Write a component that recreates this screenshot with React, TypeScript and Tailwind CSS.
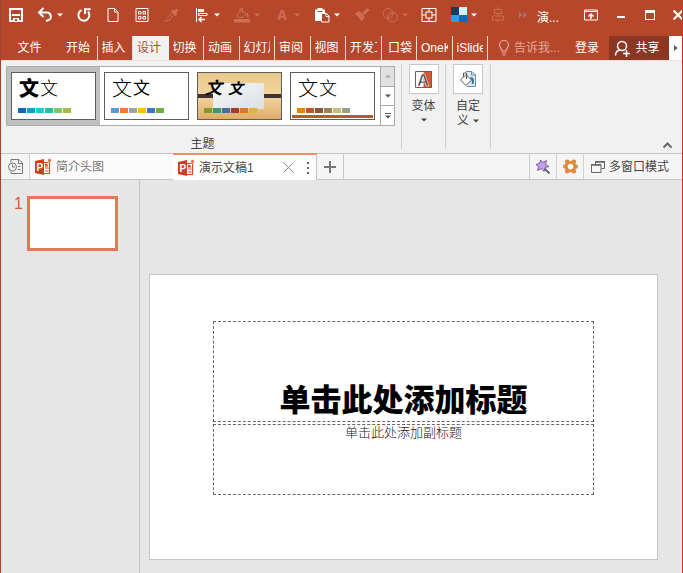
import type { ReactNode } from 'react'

const UI_FONT = "font-['Liberation_Sans','Noto_Sans_CJK_SC',sans-serif]"

function Caret({ className = '' }: { className?: string }) {
  return (
    <svg width="6" height="4" viewBox="0 0 6 4" className={`shrink-0 ${className}`} aria-hidden="true">
      <path d="M0 0.5h6L3 3.5z" fill="currentColor" />
    </svg>
  )
}

function Icon({ children, className = '' }: { children: ReactNode; className?: string }) {
  return (
    <svg width="16" height="16" viewBox="0 0 16 16" fill="none" stroke="currentColor" className={`shrink-0 ${className}`} aria-hidden="true">
      {children}
    </svg>
  )
}

function PptIcon() {
  return (
    <svg width="18" height="18" viewBox="0 0 18 18" className="shrink-0" aria-hidden="true">
      <path d="M9 4.500h6.500v11H9z" fill="#fff" stroke="#d6492a" strokeWidth="1.200" />
      <path d="M11 10h3.500M11 13h3.500" stroke="#d6492a" strokeWidth="1.200" />
      <path d="M11 5.500a3 3 0 0 1 3 3h-3z" fill="#d6492a" />
      <path d="M1 3 10 1v16L1 15z" fill="#d13c1c" />
      <circle cx="15.500" cy="2.500" r="1.900" fill="#ee6a42" stroke="#fff" strokeWidth="0.500" />
      <text x="2.500" y="12.500" fontSize="10" fontWeight="bold" fontFamily="Liberation Sans" fill="#fff">P</text>
    </svg>
  )
}

type Tool = { label: string; icon: ReactNode; width?: string; caret?: boolean; faded?: boolean }

const TOOLS: Tool[] = [
  {
    label: '保存',
    icon: (
      <Icon>
        <path d="M2 2h12v12H2z" strokeWidth="2" />
        <path d="M4 8h8" strokeWidth="2" />
        <path d="M5 11h6v3H5z" fill="currentColor" stroke="none" />
        <path d="M7 12h2v2H7z" fill="#b7472a" stroke="none" />
      </Icon>
    ),
  },
  {
    label: '撤消',
    width: 'w-[38px]',
    caret: true,
    icon: (
      <Icon>
        <path d="M2 5.500h7.500a4 4 0 0 1 1.500 7.800L9 14" strokeWidth="2" />
        <path d="M6.500 1 2 5.500 6.500 10" strokeWidth="2" />
      </Icon>
    ),
  },
  {
    label: '恢复',
    icon: (
      <Icon>
        <path d="M5.500 3.200A5.500 5.500 0 1 0 12 4.500" strokeWidth="2" />
        <path d="M9 7V2.200h5.500" strokeWidth="2" />
      </Icon>
    ),
  },
  {
    label: '新建',
    width: 'w-[28px]',
    icon: (
      <Icon>
        <path d="M3 1.500h6.500L13 5v9.500H3z" />
        <path d="M9.500 1.500V5H13" />
      </Icon>
    ),
  },
  {
    label: '网格',
    icon: (
      <Icon>
        <path d="M2 1.500h12v13H2zM4.500 4.500h2.500v2.500H4.500zM9 4.500h2.500v2.500H9zM4.500 9.500h2.500v2.500H4.500zM9 9.500h2.500v2.500H9z" />
      </Icon>
    ),
  },
  {
    label: '取色器',
    faded: true,
    icon: (
      <Icon>
        <path d="M1.500 14.500 2.500 11.500 9 5l2 2-6.500 6.500z" />
        <path d="M8 3.500 12.500 8M10.500 5.500 13.500 2.500" strokeWidth="3" />
      </Icon>
    ),
  },
  {
    label: '对齐',
    width: 'w-[40px]',
    caret: true,
    icon: (
      <Icon>
        <path d="M2.500 1v14" />
        <path d="M4 2h6v3H4z" fill="currentColor" stroke="none" />
        <path d="M4.500 6.500H13v2H4.500z" />
        <path d="M5 12.500h6M7.500 10 5 12.500 7.500 15" strokeWidth="1.500" />
      </Icon>
    ),
  },
  {
    label: '形状填充',
    width: 'w-[40px]',
    caret: true,
    faded: true,
    icon: (
      <Icon>
        <path d="M3 7 8 3l4.500 4.500L8 10.500H4zM6 5V1.500h2.500V6" />
        <path d="M12.500 6c2 2 1.500 4 1 4.500" strokeWidth="1.500" />
        <path d="M0 12h16v3.500H0z" fill="currentColor" stroke="none" />
      </Icon>
    ),
  },
  {
    label: '字体颜色',
    width: 'w-[40px]',
    caret: true,
    faded: true,
    icon: <span className="w-4 text-center text-sm leading-4 font-bold">A</span>,
  },
  {
    label: '粘贴',
    width: 'w-[40px]',
    caret: true,
    icon: (
      <Icon>
        <path d="M1 2.500h2.500V1h5v1.500H11V6H7v8H1z" fill="currentColor" stroke="none" />
        <path d="M3.500 4.500h5" stroke="#b7472a" />
        <path d="M7.500 6.500h5l2.500 2.500v6H7.500z" fill="#b7472a" />
        <path d="M12 6.500V9.500h3" />
      </Icon>
    ),
  },
  {
    label: '格式刷',
    faded: true,
    icon: (
      <Icon>
        <path d="M1 6.500 6 4l5 5-3 5.500z" fill="currentColor" stroke="none" />
        <path d="M9 7 14.500 2" strokeWidth="3" />
        <path d="M5.500 3.500 11.500 9.500" stroke="#b7472a" />
      </Icon>
    ),
  },
  {
    label: '合并形状',
    width: 'w-[36px]',
    caret: true,
    faded: true,
    icon: (
      <Icon>
        <circle cx="6" cy="6.500" r="5" />
        <circle cx="10.500" cy="10" r="5" />
        <path d="M6 10.500 10.500 5.500" />
      </Icon>
    ),
  },
  {
    label: '裁剪',
    width: 'w-[32px]',
    icon: (
      <Icon>
        <path d="M1 1.500h14v13H1zM5 5h6v6H5zM8 1.500V5M8 11v3.500M1 8h4M11 8h4" />
      </Icon>
    ),
  },
  {
    label: '配色',
    width: 'w-[38px]',
    caret: true,
    icon: (
      <Icon>
        <path d="M0 0h8v8H0z" fill="#173e68" stroke="none" />
        <path d="M8 0h8v8H8z" fill="#d8f1fc" stroke="none" />
        <path d="M0 8h8v7H0z" fill="#2f9be8" stroke="none" />
        <path d="M8 8h8v7H8z" fill="#1268b9" stroke="none" />
      </Icon>
    ),
  },
  {
    label: '水平居中',
    faded: true,
    icon: (
      <Icon>
        <path d="M4.500 2.500h7v4h-7zM2.500 9h11v4h-11zM8 0v2.500M8 6.500V9M8 13v2" />
      </Icon>
    ),
  },
]

function TitleBar() {
  return (
    <header className="flex h-[36px] items-center bg-[#b7472a] pb-1.5 text-white">
      {TOOLS.map((tool) => (
        <button
          key={tool.label}
          aria-label={tool.label}
          className={`flex h-6 shrink-0 items-center justify-center gap-1 ${tool.width ?? 'w-[30px]'} ${tool.faded ? 'text-[#cc6f57]' : 'text-white'}`}
        >
          {tool.icon}
          {tool.caret && <Caret />}
        </button>
      ))}
      <button aria-label="更多命令" className="flex h-6 w-5 shrink-0 items-center justify-center text-[#a1777b]">
        <svg width="8" height="6" viewBox="0 0 8 6" aria-hidden="true">
          <path d="M0 0l3.500 3L0 6zM4.500 0 8 3 4.500 6z" fill="currentColor" />
        </svg>
      </button>
      <h1 className="ml-1 pt-1.5 text-xs leading-4 whitespace-nowrap">演...</h1>
      <div className="ml-auto flex shrink-0 items-center">
        <button aria-label="功能区显示选项" className="flex h-6 w-[30px] items-center justify-center">
          <svg width="14" height="12" viewBox="0 0 14 12" fill="none" stroke="currentColor" aria-hidden="true">
            <path d="M0.500 1h13v10H0.500zM0.500 2.500h13" />
            <path d="M7 10V5M4.500 7.500 7 5 9.500 7.500" strokeWidth="1.500" />
          </svg>
        </button>
        <button aria-label="最小化" className="flex h-6 w-[29px] items-center justify-center">
          <span className="mt-1 h-0.5 w-2 bg-white" />
        </button>
        <button aria-label="最大化" className="flex h-6 w-[30px] items-center justify-center">
          <span className="h-[10px] w-[10px] border border-t-[3px] border-white" />
        </button>
        <button aria-label="关闭" className="flex h-6 w-[17px] items-center justify-end">
          <svg width="9" height="10" viewBox="0 0 9 10" stroke="currentColor" strokeWidth="2" aria-hidden="true">
            <path d="M0.500 0.500 9.500 9.500M9.500 0.500 0.500 9.500" />
          </svg>
        </button>
      </div>
    </header>
  )
}

const RIBBON_TABS = ['开始', '插入', '设计', '切换', '动画', '幻灯片', '审阅', '视图', '开发工具', '口袋', 'OneKey', 'iSlide']

function RibbonTabs() {
  return (
    <nav className="flex h-6 bg-[#b7472a] text-xs text-white">
      <button className="w-[61px] shrink-0 pr-1">文件</button>
      <div className="grid w-[426px] shrink-0 grid-cols-12">
        {RIBBON_TABS.map((tab) =>
          tab === '设计' ? (
            <button key={tab} aria-current="page" className="bg-[#f1f1f1] px-1 text-left text-[#b7472a]">
              {tab}
            </button>
          ) : (
            <button key={tab} className="min-w-0 border-r border-[#f3d9d1] px-1 text-left">
              <span className={`block overflow-hidden whitespace-nowrap ${tab === '口袋' ? 'text-right' : ''}`}>{tab}</span>
            </button>
          ),
        )}
      </div>
      <button className="ml-2.5 flex shrink-0 items-center gap-1 text-[#e3a999]">
        <svg width="12" height="16" viewBox="0 0 12 16" fill="none" stroke="currentColor" strokeWidth="1.200" aria-hidden="true">
          <path d="M4 11C4 8.500 1.500 8 1.500 5a4.500 4.500 0 0 1 9 0c0 3-2.500 3.500-2.500 6zM4 13h4M4.500 15h3" />
        </svg>
        告诉我...
      </button>
      <button className="ml-auto w-[44px] shrink-0">登录</button>
      <button className="flex w-[60px] shrink-0 items-center justify-center gap-1 bg-[#8c3722] pr-1">
        <svg width="17" height="17" viewBox="0 0 17 17" fill="none" stroke="currentColor" strokeWidth="1.500" aria-hidden="true">
          <circle cx="8" cy="6" r="4.500" />
          <path d="M1.500 15.500c0-3 2-5 4.500-5.500M9 13.500h7M12.500 10v7" />
        </svg>
        共享
      </button>
      <button aria-label="向右滚动" className="flex w-[13px] shrink-0 items-center justify-center bg-white text-[#555]">
        <svg width="4" height="6" viewBox="0 0 4 6" aria-hidden="true">
          <path d="M0 0 3.500 3 0 6z" fill="currentColor" />
        </svg>
      </button>
    </nav>
  )
}

function Swatches({ colors }: { colors: string[] }) {
  return (
    <span className="flex gap-px">
      {colors.map((c) => (
        <span key={c} className="h-[5px] w-2" style={{ backgroundColor: c }} />
      ))}
    </span>
  )
}

const THEMES = [
  {
    name: '当前主题',
    first: 'font-black text-[20px]',
    second: 'font-light text-[18px]',
    gap: 'gap-px',
    colors: ['#1168b4', '#159bc7', '#1bcad1', '#22c39a', '#7ccb62', '#a5bb4c'],
  },
  {
    name: 'Office 主题',
    first: 'font-light text-[20px]',
    second: 'font-normal text-[17px]',
    gap: 'gap-px',
    colors: ['#5b9bd5', '#ed7d31', '#a5a0a5', '#ffc000', '#4472c4', '#70ad47'],
  },
  {
    name: '木质主题',
    first: 'font-bold italic text-[17px]',
    second: 'font-bold italic text-[15px]',
    gap: 'gap-1.5',
    colors: ['#83992a', '#3c9770', '#44709d', '#a23c33', '#d97828', '#deb340'],
  },
  {
    name: '回顾',
    first: 'font-light text-[20px]',
    second: 'font-light text-[18px]',
    gap: 'gap-px',
    colors: ['#e48312', '#bd582c', '#865640', '#9b8357', '#c2bc80', '#94a088'],
  },
]

function ThemeCard({ theme, index }: { theme: (typeof THEMES)[number]; index: number }) {
  return (
    <button
      aria-label={theme.name}
      className={`flex h-[58px] w-[93px] items-center justify-center ${index === 0 ? 'bg-[#c0c0c0]' : ''}`}
    >
      <span
        className={`relative flex h-[48px] w-[85px] flex-col justify-between overflow-hidden border border-[#5e5e5e] pt-1 pb-1.5 pl-1.5 ${index === 2 ? 'bg-linear-to-b from-[#eac689] via-[#f2d6a2] to-[#dfac66]' : 'bg-white'}`}
      >
        {index === 2 && (
          <>
            <span className="absolute top-[21px] left-0 h-1 w-full bg-[#40342c]" />
            <span className="absolute top-[10px] left-[15px] h-[26px] w-[51px] bg-linear-to-br from-[#f7f7f5] to-[#dce0e5]" />
          </>
        )}
        {index === 3 && <span className="absolute bottom-px left-px h-[3px] w-[81px] bg-[#bd582c]" />}
        <span className={`relative flex h-[24px] items-center pl-px text-black ${theme.gap}`}>
          <span className={theme.first}>文</span>
          <span className={theme.second}>文</span>
        </span>
        <span className="relative">
          <Swatches colors={theme.colors} />
        </span>
      </span>
    </button>
  )
}

function Ribbon() {
  return (
    <section className="flex h-[93px] border-t border-[#f8ddd3] bg-[#f1f1f1] text-xs text-[#444]">
      <div className="flex flex-col items-center pt-[5px] pl-[5px]">
        <div className="flex h-[60px] border border-[#ababab] bg-white">
          {THEMES.map((theme, i) => (
            <ThemeCard key={theme.name} theme={theme} index={i} />
          ))}
          <div className="ml-px flex w-[14px] flex-col divide-y divide-[#ababab] border-l border-[#ababab] text-[#555]">
            <button aria-label="上一行" className="flex flex-1 items-center justify-center bg-[#e1e1e1] text-[#aaa]">
              <Caret className="rotate-180" />
            </button>
            <button aria-label="下一行" className="flex flex-1 items-center justify-center">
              <Caret />
            </button>
            <button aria-label="其他" className="flex flex-1 flex-col items-center justify-center gap-px">
              <span className="h-px w-1.5 bg-[#555]" />
              <Caret />
            </button>
          </div>
        </div>
        <h2 className="mt-2.5 pl-1 leading-4">主题</h2>
      </div>
      <div className="mt-[3px] ml-1.5 flex h-[85px] divide-x divide-[#d0d0d0] border-x border-[#d0d0d0]">
        <button className="flex w-[44px] flex-col items-center">
          <span className="flex h-[30px] w-[30px] items-center justify-center border border-[#c8c8c8] bg-white">
            <svg width="17" height="17" viewBox="0 0 17 17" aria-hidden="true">
              <path d="M8.500 0H17v17H8.500z" fill="#d65532" />
              <path d="M0.500 0.500h16v16H0.500z" fill="none" stroke="#9a4f3d" />
              <text x="2" y="14.500" fontSize="17" fontWeight="bold" fontFamily="Liberation Sans" fill="#3f3f46" stroke="#fff" strokeWidth="0.600">A</text>
            </svg>
          </span>
          <span className="mt-1 leading-4">变体</span>
          <Caret className="mt-1" />
        </button>
        <button className="flex w-[44px] flex-col items-center">
          <span className="flex h-[30px] w-[30px] items-center justify-center border border-[#c8c8c8] bg-white">
            <svg width="18" height="18" viewBox="0 0 18 18" fill="none" aria-hidden="true">
              <path d="M7 1.500h6l3.500 3.500v11.500H8" fill="#dcebf5" stroke="#6f8ba3" />
              <path d="M12.500 1.500V5h4" stroke="#6f8ba3" />
              <path d="M1.500 10 7 4.500l5.500 5.500-5.500 5.500z" fill="#fff" stroke="#555" />
              <path d="M4.500 7V3h3V9" stroke="#555" />
              <path d="M11.500 8c2.500 0 3 2 2 6" stroke="#2d6da3" strokeWidth="2" />
            </svg>
          </span>
          <span className="mt-1 leading-4">自定</span>
          <span className="flex items-center gap-1 leading-[14px]">
            义
            <Caret />
          </span>
        </button>
      </div>
      <button aria-label="折叠功能区" className="mr-2.5 mb-1 ml-auto flex items-center self-end">
        <svg width="9" height="7" viewBox="0 0 9 7" fill="none" stroke="#666" strokeWidth="2" aria-hidden="true">
          <path d="M0.500 5.500 4.500 1.500 8.500 5.500" />
        </svg>
      </button>
    </section>
  )
}

function DocumentTabs() {
  return (
    <div className="flex h-[27px] border-y border-[#c6c6c6] bg-[#f5f5f5] text-xs text-[#444]">
      <button aria-label="最近文档" className="flex w-[29px] shrink-0 items-center justify-center border-r border-[#d0d0d0] text-[#777]">
        <svg width="17" height="17" viewBox="0 0 17 17" fill="none" stroke="currentColor" aria-hidden="true">
          <path d="M4 4.500V1.500h8l3.500 3.500v10.500H4v-2M11.500 1.500V5.500h4M11 8.500h2.500M11 11.500h2.500" />
          <circle cx="5.500" cy="9" r="4" />
          <path d="M5.500 6.500V9h2.500" />
        </svg>
      </button>
      <button className="flex w-[143px] shrink-0 items-center gap-1 bg-[#fbfbfb] pl-1 text-[#777]">
        <PptIcon />
        简介头图
      </button>
      <div className="-my-px flex w-[144px] shrink-0 items-center border-t-2 border-r border-t-[#ee8f69] border-r-[#c6c6c6] bg-white">
        <button className="flex items-center gap-1 pl-1">
          <PptIcon />
          演示文稿1
        </button>
        <button aria-label="关闭标签" className="ml-auto text-[#888]">
          <svg width="11" height="11" viewBox="0 0 11 11" stroke="currentColor" aria-hidden="true">
            <path d="M0.500 0.500 10.500 10.500M10.500 0.500 0.500 10.500" />
          </svg>
        </button>
        <button aria-label="标签菜单" className="mr-0.5 ml-2 flex w-3 flex-col items-center gap-[3px]">
          <span className="size-0.5 bg-[#666]" />
          <span className="size-0.5 bg-[#666]" />
          <span className="size-0.5 bg-[#666]" />
        </button>
      </div>
      <button aria-label="新建标签" className="flex w-[27px] shrink-0 items-center justify-center border-r border-[#c6c6c6] text-[#777]">
        <svg width="12" height="12" viewBox="0 0 12 12" stroke="currentColor" strokeWidth="2" aria-hidden="true">
          <path d="M6 0v12M0 6h12" />
        </svg>
      </button>
      <div className="ml-auto flex divide-x divide-[#d0d0d0] border-l border-[#d0d0d0]">
        <button aria-label="美化" className="flex w-[27px] items-center justify-center">
          <svg width="16" height="16" viewBox="0 0 16 16" aria-hidden="true">
            <path d="M9 9 14.500 14.500" stroke="#666" strokeWidth="2" />
            <path d="M5.500 1 7.500 3.500 11.500 1.500 10.500 5.500 14 7.500 10 8.500 9 12.500 6.500 9.500 2.500 11.500 3.500 7.500 1 5.500 4.500 4.500z" fill="#c3a0ea" stroke="#7a5ca8" />
          </svg>
        </button>
        <button aria-label="设置" className="flex w-[27px] items-center justify-center">
          <svg width="15" height="15" viewBox="0 0 16 16" aria-hidden="true">
            <g fill="#e08a3c">
              <circle cx="8" cy="8" r="6" />
              <circle cx="4.500" cy="3" r="2.500" />
              <circle cx="11.500" cy="3" r="2.500" />
              <circle cx="2.500" cy="8" r="2.500" />
              <circle cx="13.500" cy="8" r="2.500" />
              <circle cx="4.500" cy="13" r="2.500" />
              <circle cx="11.500" cy="13" r="2.500" />
            </g>
            <circle cx="8" cy="8" r="3" fill="#fff" />
          </svg>
        </button>
        <button className="flex w-[98px] items-center gap-1 pl-[7px]">
          <svg width="14" height="12" viewBox="0 0 14 12" fill="none" stroke="#666" aria-hidden="true">
            <path d="M4.500 3.500v-3h9v7h-3M0.500 3.500h9.500v8H0.500z" />
            <path d="M4 1h10M0.500 4h9.500" strokeWidth="1.500" />
          </svg>
          多窗口模式
        </button>
      </div>
    </div>
  )
}

function Workspace() {
  return (
    <div className="flex flex-1 bg-[#e6e6e6]">
      <aside className="flex w-[139px] shrink-0 items-start gap-1 border-r border-[#c3c3c3] pt-4 pl-[13px]">
        <span className="w-[9px] text-base leading-4 text-[#d9593a]">1</span>
        <button aria-label="幻灯片 1" className="h-[55px] w-[91px] border-[3px] border-[#e8745a] bg-white" />
      </aside>
      <main className="flex-1 pt-[94px] pr-6 pb-3 pl-[9px]">
        <article className="flex aspect-video flex-col gap-0.5 border border-[#c3c6c3] bg-white px-[63px] pt-[46px]">
          <div className="flex h-[101px] items-end justify-center border border-dashed border-[#666]">
            <h2 className="pb-0.5 text-[31px] leading-9 font-black whitespace-nowrap text-black">单击此处添加标题</h2>
          </div>
          <div className="h-[71px] border border-dashed border-[#666] text-center">
            <p className="text-[13px] leading-4 font-light text-[#222]">单击此处添加副标题</p>
          </div>
        </article>
      </main>
    </div>
  )
}

export default function App() {
  return (
    <div className={`flex min-h-screen flex-col overflow-hidden border-r border-l border-r-[#c8341c] border-l-[#a34430] ${UI_FONT}`}>
      <TitleBar />
      <RibbonTabs />
      <Ribbon />
      <DocumentTabs />
      <Workspace />
    </div>
  )
}
